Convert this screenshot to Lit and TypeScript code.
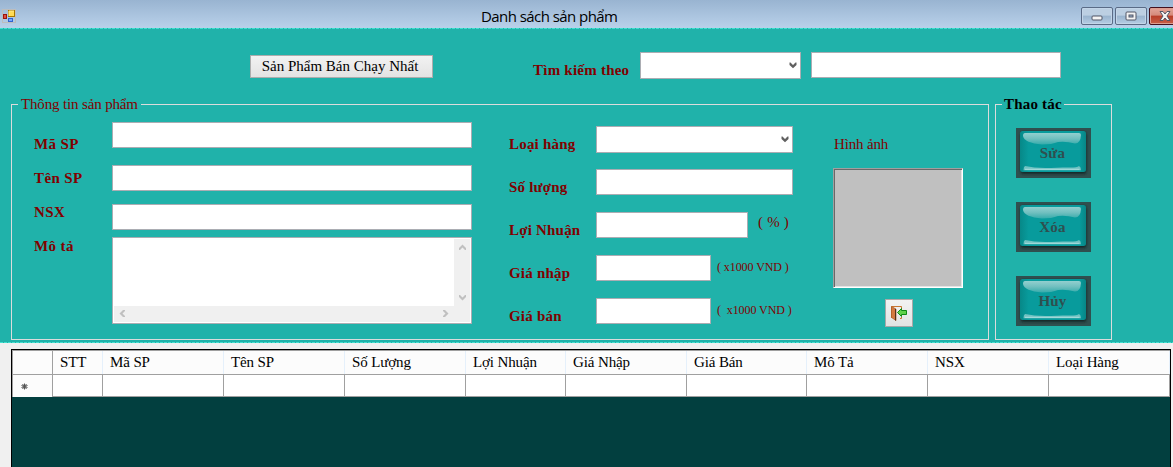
import { LitElement, html, css } from "lit";
import { customElement } from "lit/decorators.js";

const columns: [string, number][] = [
  ["STT", 50], ["Mã SP", 121], ["Tên SP", 121], ["Số Lượng", 121], ["Lợi Nhuận", 100],
  ["Giá Nhập", 121], ["Giá Bán", 120], ["Mô Tả", 121], ["NSX", 121], ["Loại Hàng", 121],
];

const chevron = () => html`<svg width="8" height="7" viewBox="0 0 8 7">
  <path d="M.5 .5H1.500L4 3L6.500 .5H7.500V3L4 6.300L.5 3Z" fill="currentColor"/></svg>`;

@customElement("glass-button")
class GlassButton extends LitElement {
  static properties = { label: {} };
  declare label: string;
  static styles = css`
    :host { display: block; width: 75px; height: 50px; }
    button { display: grid; width: 75px; height: 50px; padding: 0; border: 0; background: #2f4f4f; }
    svg, span { grid-area: 1 / 1; }
    span { place-self: center; padding: 0 2px 0 0; letter-spacing: .2px; font: bold 15px/20px "Liberation Serif", serif; color: #2f4f4f; }
  `;
  render() {
    return html`<button>
      <svg width="75" height="50" viewBox="0 0 75 50">
        <defs>
          <linearGradient id="top" x2="0" y2="1"><stop stop-color="#93cfcf"/><stop offset=".5" stop-color="#70bfbf"/><stop offset="1" stop-color="#35abab"/></linearGradient>
          <linearGradient id="side"><stop stop-color="#078888"/><stop offset=".13" stop-color="#089b9c"/><stop offset=".9" stop-color="#089b9c"/><stop offset="1" stop-color="#078686"/></linearGradient>
          <filter id="soft"><feGaussianBlur stdDeviation="1"/></filter>
        </defs>
        <rect x="4.5" y="4" width="66" height="42" rx="3" fill="#122c2c" filter="url(#soft)"/>
        <rect x="4" y="3" width="66" height="41" rx="2.5" fill="url(#side)"/>
        <path d="M9 5H63Q65 5 65 7Q64.500 15.500 59 15.500Q50 13 42 14Q36 16.500 26 16.500Q8.500 15 7 8Q7 5 9 5Z" fill="url(#top)"/>
        <path d="M9 38Q7.500 39 7.500 42.200H65Q65 39 63 38Q61 39.600 54 39.600Q44 39.200 35 39.900Q20 40.500 9 38Z" fill="#70c2c2"/>
        <path d="M9 41.300H63.500" stroke="#a0d8d8" stroke-width="1.200"/>
      </svg>
      <span>${this.label}</span>
    </button>`;
  }
}

@customElement("app-root")
class AppRoot extends LitElement {
  static styles = css`
    :host { display: flex; flex-direction: column; width: 1173px; height: 467px; overflow: hidden; background: #f0f0f0; font: 15px/20px "Liberation Serif", serif; color: #000; }
    * { box-sizing: border-box; }
    .titlebar { flex: none; height: 28px; display: flex; align-items: flex-start; padding: 7px 0 0 2px; background: linear-gradient(#99b4d1, #b9d1ea); overflow: hidden; }
    .logo { flex: none; display: block; margin-top: 2px; }
    .title { flex: none; width: 600px; margin: -1px 0 0 465px; font: 15px/20px "Open Sans", "Noto Sans", sans-serif; letter-spacing: -.56px; white-space: nowrap; }
    .winbtns { flex: none; display: flex; gap: 2px; }
    .win { flex: none; display: grid; place-items: center; width: 32px; height: 18px; border: 1px solid #5a6b86; border-radius: 2px; box-shadow: inset 0 0 0 1px #c3d5e8; background: linear-gradient(#bccfe2 0 45%, #9ab4ce 50%, #b5cde4); }
    .win.close { border-color: #43101d; box-shadow: inset 0 0 0 1px #dc9d90; background: linear-gradient(#e3a599, #d58a7b 45%, #b83d28 50%, #c86048); }
    .win svg { display: block; }
    .win .min { margin-top: 4px; }
    .dash { flex: none; height: 1px; background: repeating-linear-gradient(90deg, #40e0d0 0 3px, #20b2aa 3px 4px); }
    .panel { flex: none; height: 313px; background: #20b2aa; color: #800000; }
    .search { display: flex; align-items: flex-start; height: 67px; padding: 23px 0 0 250px; }
    .plain { display: block; padding: 0; border: 1px solid #adadad; background: linear-gradient(#f2f2f2, #e3e3e3); font: 15px/20px "Liberation Serif", serif; color: #000; }
    .best { width: 183px; height: 23px; margin: 3px 100px 0 0; padding: 0 3px 2px 0; white-space: nowrap; }
    .search b { width: 107px; margin-top: 8px; white-space: nowrap; letter-spacing: .23px; }
    .field { height: 26px; background: #fff; border: 1px solid #abadb3; flex: none; }
    .combo { display: flex; justify-content: flex-end; align-items: center; height: 27px; padding: 0 3px 0 0; color: #606060; }
    .groups { display: flex; gap: 6px; padding-left: 11px; }
    fieldset { margin: 0; height: 244px; border: 1px solid #dcdcdc; padding: 0 6px; min-width: 0; }
    legend { height: 17px; line-height: 17px; padding: 0 3px; white-space: nowrap; }
    .info { width: 978px; }
    .info legend { width: 123px; letter-spacing: -.15px; }
    .ops { width: 117px; }
    .ops legend { width: 62px; padding: 0 1px 0 2px; font-weight: bold; color: #000; letter-spacing: .2px; }
    .opslist { display: grid; gap: 24px; padding: 15px 0 0 14px; }
    .cols { display: flex; align-items: flex-start; }
    .labels { display: grid; grid-auto-rows: 34px; width: 78px; margin-left: 16px; padding-top: 14px; line-height: 34px; font-weight: bold; letter-spacing: .4px; }
    .inputs { width: 360px; padding-top: 9px; display: flex; flex-direction: column; }
    .inputs .field:nth-child(2) { margin-top: 17px; }
    .inputs .field:nth-child(3) { margin-top: 13px; }
    .memo { height: 87px; margin-top: 7px; padding: 1px; display: grid; grid-template: 1fr 16px / 1fr 16px; color: #c0c0c0; }
    .vbar { background: #f0f0f0; display: flex; flex-direction: column; justify-content: space-between; align-items: center; padding: 5px 0 5px; }
    .hbar { background: #f0f0f0; display: flex; justify-content: space-between; align-items: center; padding: 0 5px 1px 5px; }
    .corner { background: #f0f0f0; }
    .pricing { width: 284px; margin-left: 37px; padding-top: 13px; display: grid; grid-auto-rows: 43px; }
    .row { display: flex; align-items: flex-start; white-space: pre; }
    .row b { width: 87px; margin-top: 8px; letter-spacing: .2px; }
    .unit { margin: 0 0 0 10px; letter-spacing: .2px; }
    .unit.small { margin: 2px 0 0 6px; font-size: 12px; letter-spacing: -.08px; }
    .w197 { width: 197px; } .w152 { width: 152px; } .w115 { width: 115px; } .w161 { width: 161px; } .w250 { width: 250px; margin-left: 10px; }
    .photo { width: 130px; margin-left: 40px; padding-top: 21px; display: flex; flex-direction: column; }
    .photo span { margin-left: 1px; letter-spacing: -.15px; }
    .picture { height: 120px; margin-top: 14px; background: #c0c0c0; border: 1px solid; border-color: #a0a0a0 #fff #fff #a0a0a0; box-shadow: inset 1px 1px #696969, inset -1px -1px #e3e3e3; }
    .pick { width: 28px; height: 28px; margin: 11px 0 0 52px; border-color: #a8a8a8; }
    .pick svg { display: block; margin: 0 0 0 4px; }
    .gridview { flex: none; width: 1160px; height: 130px; margin: 6px 0 0 11px; border: 1px solid #000; background: #023f3f; }
    .line { display: flex; height: 22px; }
    .head { height: 25px; border-top: 1px solid #a0a0a0; border-bottom: 1px solid #a0a0a0; background: #fcfcfc; line-height: 23px; letter-spacing: -.12px; }
    .cell { flex: none; border-right: 1px solid #a0a0a0; border-bottom: 1px solid #a0a0a0; background: #fff; }
    .head .cell { border-bottom: 0; border-right-color: #e5f0fb; background: #fcfcfc; padding-left: 7px; white-space: nowrap; }
    .line .first { width: 41px; padding: 0; border-left: 1px solid #a0a0a0; }
    .head .first { border-right-color: #a0a0a0; }
    .body .first { border-bottom: 0; background: #fcfcfc; display: flex; align-items: center; padding-left: 8px; }
  `;

  render() {
    return html`
      <div class="titlebar">
        <svg class="logo" width="14" height="14" viewBox="0 0 14 14">
          <rect x=".5" y=".5" width="13" height="13" fill="none" stroke="#bdbdbd"/>
          <rect x="1.5" y="5.5" width="3" height="4" fill="#e05040" stroke="#9b1510"/>
          <rect x="6.5" y="1.5" width="6" height="6" fill="#ffdb55" stroke="#a87800"/>
          <path d="M7 7V2H12" fill="none" stroke="#ffe98e"/>
          <rect x="6.5" y="9.5" width="4" height="3" fill="#75a8ff" stroke="#3163cf"/>
        </svg>
        <div class="title">Danh sách sản phẩm</div>
        <div class="winbtns">
          <div class="win"><svg class="min" width="12" height="6"><rect x="1" y="1" width="10" height="4" rx="1" fill="#f4f4f4" stroke="#535666"/></svg></div>
          <div class="win"><svg width="12" height="10"><rect x="1" y="1" width="10" height="8" rx="1" fill="#f4f4f4" stroke="#535666"/><rect x="4" y="4" width="4" height="2" fill="#9db5cf" stroke="#535666"/></svg></div>
          <div class="win close"><svg width="12" height="10"><path d="M1 .5H4L6 3 8 .5H11L8 5 11 9.500H8L6 7 4 9.500H1L4 5Z" fill="#f4f4f4" stroke="#535666"/></svg></div>
        </div>
      </div>
      <div class="dash"></div>
      <div class="panel">
        <div class="search">
          <button class="plain best">Sản Phẩm Bán Chạy Nhất</button>
          <b>Tìm kiếm theo</b>
          <div class="field combo w161">${chevron()}</div>
          <div class="field w250"></div>
        </div>
        <div class="groups">
          <fieldset class="info">
            <legend>Thông tin sản phẩm</legend>
            <div class="cols">
              <div class="labels"><span>Mã SP</span><span>Tên SP</span><span>NSX</span><span>Mô tả</span></div>
              <div class="inputs">
                <div class="field"></div><div class="field"></div><div class="field"></div>
                <div class="field memo">
                  <div></div>
                  <div class="vbar">
                    <svg width="9" height="7"><path d="M1 6V4L4.500 .5 8 4V6H7L4.500 3.500 2 6Z" fill="currentColor"/></svg>
                    <svg width="9" height="7"><path d="M1 1V3L4.500 6.500 8 3V1H7L4.500 3.500 2 1Z" fill="currentColor"/></svg>
                  </div>
                  <div class="hbar">
                    <svg width="7" height="9"><path d="M6 1H4L.5 4.500 4 8H6V7L3.500 4.500 6 2Z" fill="currentColor"/></svg>
                    <svg width="7" height="9"><path d="M1 1H3L6.500 4.500 3 8H1V7L3.500 4.500 1 2Z" fill="currentColor"/></svg>
                  </div>
                  <div class="corner"></div>
                </div>
              </div>
              <div class="pricing">
                <div class="row"><b>Loại hàng</b><div class="field combo w197">${chevron()}</div></div>
                <div class="row"><b>Số lượng</b><div class="field w197"></div></div>
                <div class="row"><b>Lợi Nhuận</b><div class="field w152"></div><span class="unit">( % )</span></div>
                <div class="row"><b>Giá nhập</b><div class="field w115"></div><span class="unit small">( x1000 VND )</span></div>
                <div class="row"><b>Giá bán</b><div class="field w115"></div><span class="unit small">(  x1000 VND )</span></div>
              </div>
              <div class="photo">
                <span>Hình ảnh</span>
                <div class="picture"></div>
                <button class="plain pick"><svg width="18" height="18" viewBox="0 0 18 18">
                  <path d="M1.500 14V2.500H11.500V5M11.500 13V14.500H10" fill="none" stroke="#c87530"/>
                  <path d="M1.500 2.500L6 5V16.500L1.500 13.500Z" fill="#d4793f" stroke="#a95721" stroke-width=".7"/>
                  <path d="M5.500 5V16.500" stroke="#54301a"/>
                  <path d="M7.500 8.500L11.500 4.500V6.500H16.500V10.500H11.500V12.500Z" fill="#62d24b" stroke="#118b16"/>
                </svg></button>
              </div>
            </div>
          </fieldset>
          <fieldset class="ops">
            <legend>Thao tác</legend>
            <div class="opslist">
              <glass-button label="Sửa"></glass-button>
              <glass-button label="Xóa"></glass-button>
              <glass-button label="Hủy"></glass-button>
            </div>
          </fieldset>
        </div>
      </div>
      <div class="dash"></div>
      <div class="gridview">
        <div class="line head"><div class="cell first"></div>${columns.map(([n, w]) => html`<div class="cell" style="width:${w}px">${n}</div>`)}</div>
        <div class="line body"><div class="cell first"><svg width="7" height="7" viewBox="0 0 7 7"><path d="M3.500 .5V6.500M.5 2.500L6.500 4.500M6.500 2.500L.5 4.500M1.500 6L5.500 1M5.500 6L1.500 1" stroke="#555" stroke-width="1"/></svg></div>${columns.map(([, w]) => html`<div class="cell" style="width:${w}px"></div>`)}</div>
      </div>`;
  }
}
